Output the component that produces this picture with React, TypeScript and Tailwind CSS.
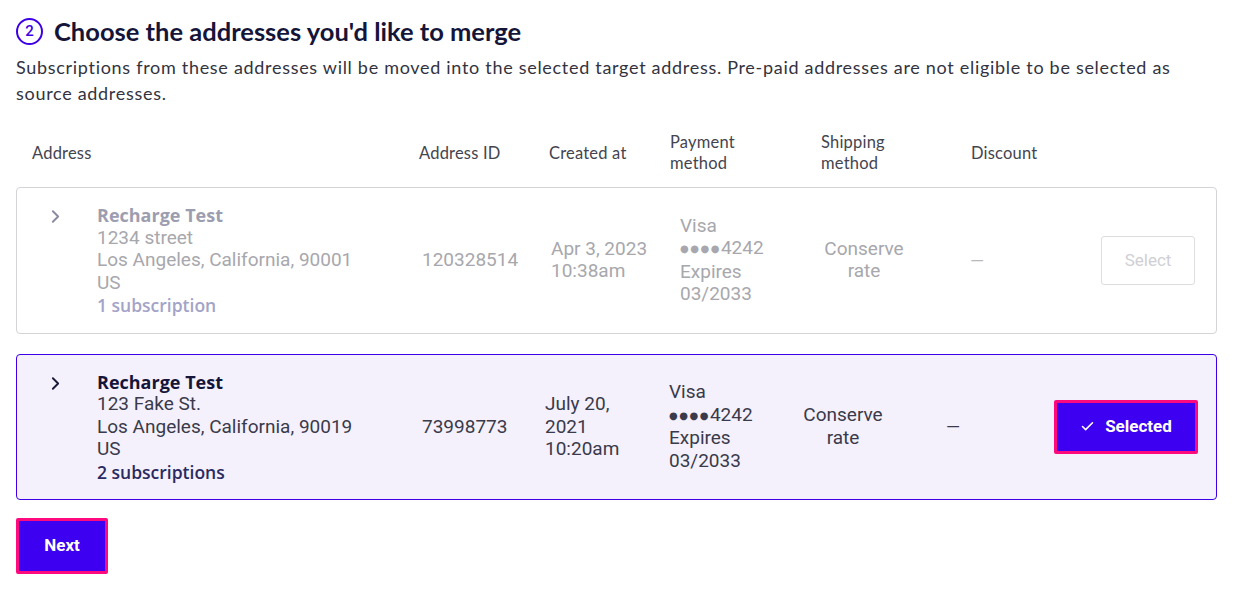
import { Check, ChevronRight } from "lucide-react";

const lato = "font-['Lato','Noto_Sans',sans-serif]";
const roboto = "font-['Roboto','Liberation_Sans',sans-serif]";
const opensans = "font-['Open_Sans','Noto_Sans',sans-serif]";

type Row = {
  name: string;
  street: string;
  city: string;
  id: string;
  created: string[];
  subs: string;
  selected: boolean;
};

const rows: Row[] = [
  {
    name: "Recharge Test",
    street: "1234 street",
    city: "Los Angeles, California, 90001",
    id: "120328514",
    created: ["Apr 3, 2023", "10:38am"],
    subs: "1 subscription",
    selected: false,
  },
  {
    name: "Recharge Test",
    street: "123 Fake St.",
    city: "Los Angeles, California, 90019",
    id: "73998773",
    created: ["July 20,", "2021", "10:20am"],
    subs: "2 subscriptions",
    selected: true,
  },
];

function AddressRow({ r }: { r: Row }) {
  const sel = r.selected;
  const muted = sel ? "text-[#3a3a4a]" : "text-[#a7a7ad]";
  const body = `${roboto} text-[19px] leading-[22.5px] ${muted}`;
  return (
    <div
      className={`flex items-center rounded border py-4 pl-[28px] ${
        sel ? "border-[#3d00e6] bg-[#f4f1fc]" : "border-[#d4d4d8] bg-white"
      }`}
    >
      <div className="w-[52px] self-start pt-[2px]">
        <ChevronRight
          size={21}
          strokeWidth={2.2}
          className={sel ? "text-[#1a1a3a]" : "text-[#8a8aa0]"}
        />
      </div>
      <div className={`w-[325px] ${body}`}>
        <div
          className={`${opensans} text-[18px] font-bold ${sel ? "text-[#15153a]" : "text-[#9d9db0]"}`}
        >
          {r.name}
        </div>
        <div>{r.street}</div>
        <div>{r.city}</div>
        <div>US</div>
        <div
          className={`${opensans} text-[17.5px] font-semibold ${sel ? "text-[#2a2a60]" : "text-[#a3a3c8]"}`}
        >
          {r.subs}
        </div>
      </div>
      <div className={`${sel ? "w-[123px]" : "w-[129px]"} ${body}`}>{r.id}</div>
      <div className={`${sel ? "w-[124px]" : "w-[129px]"} ${body}`}>
        {r.created.map((c) => (
          <div key={c}>{c}</div>
        ))}
      </div>
      <div className={`${sel ? "w-[125px]" : "w-[135px]"} ${body}`}>
        <div>Visa</div>
        <div>
          <span className="align-[2px] font-['DejaVu_Sans',sans-serif] text-[10px] tracking-[1.5px]">
            ●●●●
          </span>
          4242
        </div>
        <div>Expires</div>
        <div>03/2033</div>
      </div>
      <div className={`w-[98px] text-center ${body}`}>
        <div>Conserve</div>
        <div>rate</div>
      </div>
      <div
        className={`${sel ? "ml-[54px] text-[#3a3a4a]" : "ml-[57px] text-[#b8b8bd]"} flex-1 ${roboto} text-[18px]`}
      >
        —
      </div>
      {sel ? (
        <button
          className={`mr-[18px] flex h-[54px] w-[144px] items-center justify-center gap-[10px] rounded-[2px] border-[3px] border-[#ff0a7e] bg-[#3d00f0] ${roboto} text-[17px] font-bold text-white`}
        >
          <Check size={15} strokeWidth={2.5} />
          Selected
        </button>
      ) : (
        <button
          className={`mr-[21px] h-[49px] w-[94px] rounded-[3px] border border-[#dedee2] bg-white ${roboto} text-[17px] text-[#cfcfd4]`}
        >
          Select
        </button>
      )}
    </div>
  );
}

export default function App() {
  return (
    <div className="min-h-screen bg-white px-4 pt-[16px]">
      <div className="flex items-center gap-[11px]">
        <div
          className={`flex h-[27px] w-[27px] items-center justify-center rounded-full border-2 border-[#3d00e6] ${roboto} text-[15px] font-medium text-[#3d00e6]`}
        >
          2
        </div>
        <h2 className={`${lato} text-[25.5px] font-bold leading-[30px] text-[#15153a]`}>
          Choose the addresses you'd like to merge
        </h2>
      </div>
      <p
        className={`mt-[8px] ${lato} text-[18px] leading-[26px] tracking-[0.7px] text-[#333340]`}
      >
        Subscriptions from these addresses will be moved into the selected target
        address. Pre-paid addresses are not eligible to be selected as source
        addresses.
      </p>

      <div
        className={`mt-[26px] flex items-center pl-[16px] ${lato} text-[16.5px] leading-[21px] tracking-[0.2px] text-[#44444f]`}
      >
        <div className="w-[387px]">Address</div>
        <div className="w-[130px]">Address ID</div>
        <div className="w-[121px]">Created at</div>
        <div className="w-[151px]">
          Payment
          <br />
          method
        </div>
        <div className="w-[150px]">
          Shipping
          <br />
          method
        </div>
        <div>Discount</div>
      </div>

      <div className="mt-[13px] flex flex-col gap-[20px]">
        {rows.map((r) => (
          <AddressRow key={r.id} r={r} />
        ))}
      </div>

      <button
        className={`mt-[18px] h-[56px] w-[92px] rounded-[2px] border-[3px] border-[#ff0a7e] bg-[#3d00f0] ${roboto} text-[17px] font-bold text-white`}
      >
        Next
      </button>
    </div>
  );
}
